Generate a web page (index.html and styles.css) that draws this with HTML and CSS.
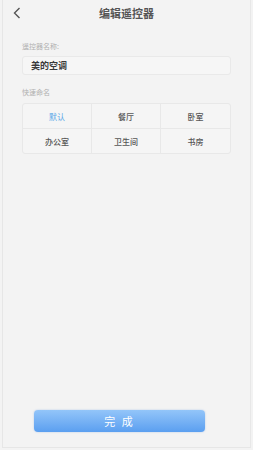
FILE: index.html
```html
<!DOCTYPE html>
<html>
  <head>
    <meta charset="UTF-8" />
    <title>编辑遥控器</title>
    <link rel="stylesheet" href="styles.css">
  </head>
  <body>
    <div class="frame">
      <!-- Top bar -->
      <div class="topbar">
        <svg class="back" width="8" height="12" viewBox="0 0 8 12">
          <path d="M6.5 1 L1.5 6 L6.5 11" fill="none" stroke="#555" stroke-width="1.4" />
        </svg>
        <div class="title">编辑遥控器</div>
      </div>

      <div class="content">
        <div class="label">遥控器名称:</div>
        <div class="name-box">美的空调</div>

        <div class="label quick">快速命名</div>
        <div class="grid">
          <div class="cell active">默认</div>
          <div class="cell">餐厅</div>
          <div class="cell">卧室</div>
          <div class="cell">办公室</div>
          <div class="cell">卫生间</div>
          <div class="cell">书房</div>
        </div>

        <div class="spacer"></div>

        <div class="button-row">
          <button class="done-button">完 成</button>
        </div>
      </div>
    </div>
  </body>
</html>
```

FILE: styles.css
```css
body {
  margin: 0;
  background: #f3f3f3;
  font-family: "Noto Sans CJK SC", "Noto Sans", sans-serif;
  color: #333;
}
.frame {
  width: 249px;
  height: 448px;
  margin-left: 2px;
  border-left: 1px solid #e6e6e6;
  border-right: 1px solid #e8e8e8;
  border-bottom: 1px solid #e6e6e6;
  display: flex;
  flex-direction: column;
  box-sizing: border-box;
}

/* header */
.topbar {
  height: 26px;
  display: flex;
  align-items: center;
  justify-content: center;
  position: relative;
}
.back {
  position: absolute;
  left: 10px;
  top: 7px;
}
.title {
  font-size: 11px;
  font-weight: bold;
  color: #555;
}

.content {
  flex: 1;
  display: flex;
  flex-direction: column;
  padding: 15px 19px 0 19px;
}

.label {
  font-size: 7px;
  color: #b0b0b0;
  line-height: 10px;
}
.label.quick {
  margin-top: 12px;
}

.name-box {
  margin-top: 5px;
  height: 17px;
  background: #f6f6f6;
  border: 1px solid #e9e9e9;
  border-radius: 3px;
  padding-left: 8px;
  font-size: 9px;
  font-weight: bold;
  line-height: 17px;
  color: #3a3a3a;
}

.grid {
  margin-top: 6px;
  display: grid;
  grid-template-columns: repeat(3, 1fr);
  border: 1px solid #e8e8e8;
  border-radius: 3px;
  background: #f5f5f5;
}
.cell {
  height: 24px;
  display: flex;
  align-items: center;
  justify-content: center;
  font-size: 8px;
  font-weight: 500;
  color: #555;
  border-right: 1px solid #e8e8e8;
  border-bottom: 1px solid #e8e8e8;
}
.cell:nth-child(3n) {
  border-right: none;
}
.cell:nth-child(n+4) {
  border-bottom: none;
}
.cell.active {
  color: #5aa8e8;
  font-weight: normal;
}

.spacer {
  flex: 1;
}

.button-row {
  padding-left: 12px;
  margin-bottom: 15px;
}
.done-button {
  width: 171px;
  height: 22px;
  border: none;
  border-radius: 4px;
  background: linear-gradient(#93c5f9, #5b9ff0);
  color: #fff;
  font-family: "Noto Sans CJK SC", sans-serif;
  font-size: 11px;
  letter-spacing: 2px;
  box-shadow: 0 0 2px rgba(80, 140, 220, 0.4);
}
```
